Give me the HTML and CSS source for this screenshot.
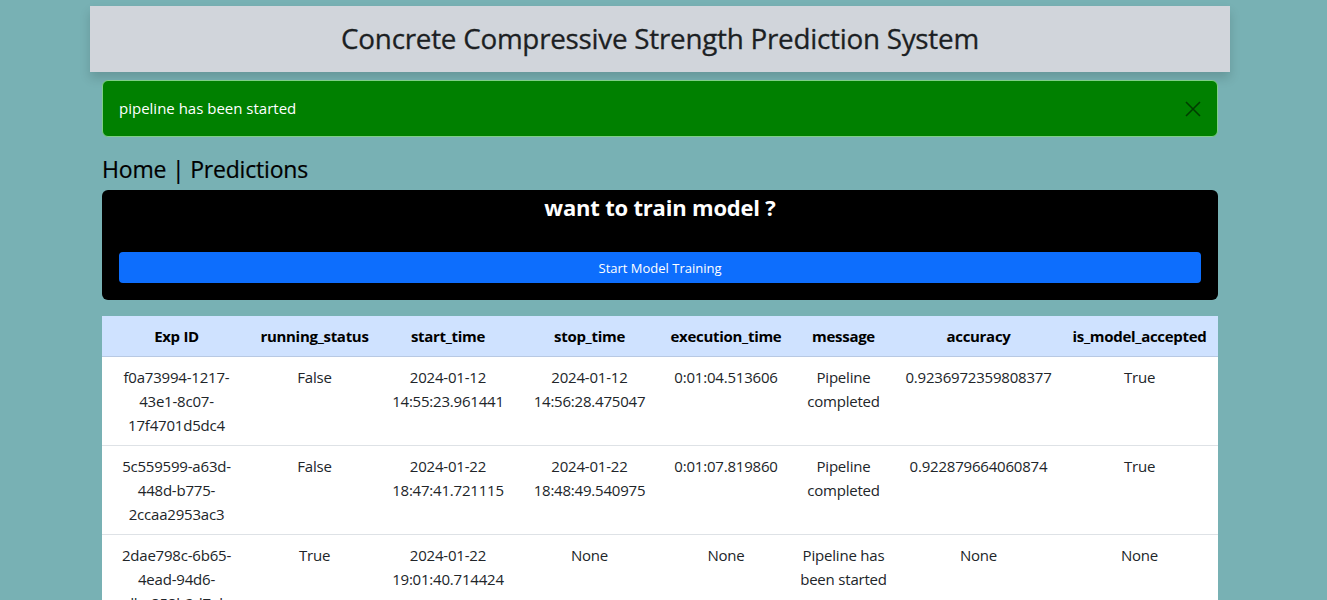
FILE: index.html
```html
<!DOCTYPE html>
<html lang="en">
<head>
<meta charset="utf-8">
<title>Concrete Compressive Strength Prediction System</title>
<link rel="stylesheet" href="styles.css">
</head>
<body>
<div class="page">
  <header class="topbar">
    <h1 class="title">Concrete Compressive Strength Prediction System</h1>
  </header>
  <main class="content">
    <div class="alert">
      <span>pipeline has been started</span>
      <button class="close" aria-label="Close">
        <svg width="16" height="16" viewBox="0 0 16 16"><path d="M1 1 L15 15 M15 1 L1 15" stroke="currentColor" stroke-width="1.6" fill="none"/></svg>
      </button>
    </div>
    <nav class="nav"><a href="#">Home</a> | <a href="#">Predictions</a></nav>
    <section class="train">
      <h2 class="train-title">want to train model ?</h2>
      <button class="btn">Start Model Training</button>
    </section>
    <table class="runs">
      <colgroup>
        <col style="width:149px"><col style="width:127px"><col style="width:140px"><col style="width:143px"><col style="width:130px"><col style="width:105px"><col style="width:165px"><col style="width:157px">
      </colgroup>
      <thead>
        <tr>
          <th>Exp ID</th><th>running_status</th><th>start_time</th><th>stop_time</th><th>execution_time</th><th>message</th><th>accuracy</th><th>is_model_accepted</th>
        </tr>
      </thead>
      <tbody>
        <tr>
          <td>f0a73994-1217-<br>43e1-8c07-<br>17f4701d5dc4</td><td>False</td><td>2024-01-12<br>14:55:23.961441</td><td>2024-01-12<br>14:56:28.475047</td><td>0:01:04.513606</td><td>Pipeline<br>completed</td><td>0.9236972359808377</td><td>True</td>
        </tr>
        <tr>
          <td>5c559599-a63d-<br>448d-b775-<br>2ccaa2953ac3</td><td>False</td><td>2024-01-22<br>18:47:41.721115</td><td>2024-01-22<br>18:48:49.540975</td><td>0:01:07.819860</td><td>Pipeline<br>completed</td><td>0.922879664060874</td><td>True</td>
        </tr>
        <tr>
          <td>2dae798c-6b65-<br>4ead-94d6-<br>dbe858b2d7eb</td><td>True</td><td>2024-01-22<br>19:01:40.714424</td><td>None</td><td>None</td><td>Pipeline has<br>been started</td><td>None</td><td>None</td>
        </tr>
      </tbody>
    </table>
  </main>
</div>
</body>
</html>
```
FILE: styles.css
```css
* { box-sizing: border-box; }
body {
  margin: 0;
  padding-right: 7px;
  background: #78b1b4;
  font-family: "Open Sans", "Noto Sans", sans-serif;
  font-size: 16px;
  line-height: 1.5;
  color: #212529;
}
.page {
  width: 1140px;
  margin: 0 auto;
  padding-top: 6px;
}
.topbar {
  height: 66px;
  background: #d1d5db;
  box-shadow: 0 6px 10px rgba(0,0,0,0.15);
  display: flex;
  align-items: center;
  justify-content: center;
}
.title {
  margin: 0;
  font-size: 27.8px;
  font-weight: 400;
  letter-spacing: -0.25px;
  color: #1c1f23;
  line-height: 1.2;
  -webkit-text-stroke: 0.3px #1c1f23;
}
.content {
  padding: 0 12px;
}
.alert {
  margin-top: 8px;
  height: 57px;
  background: #008000;
  border: 1px solid #7fcf86;
  border-radius: 6px;
  color: #fff;
  padding: 0 16px;
  display: flex;
  align-items: center;
  justify-content: space-between;
  font-size: 15px;
}
.close {
  border: 0;
  background: none;
  color: #003d00;
  padding: 0;
  margin-right: 0;
  display: flex;
  cursor: pointer;
}
.nav {
  margin-top: 18px;
  font-size: 23px;
  line-height: 28px;
  color: #000;
  letter-spacing: -0.2px;
  -webkit-text-stroke: 0.2px #000;
}
.nav a { color: #000; text-decoration: none; }
.train {
  margin-top: 7px;
  background: #000;
  border-radius: 6px;
  padding: 2px 17px 17px;
  text-align: center;
}
.train-title {
  margin: 0;
  font-size: 22px;
  font-weight: 700;
  color: #fff;
  line-height: 30px;
  letter-spacing: -0.2px;
}
.btn {
  display: block;
  width: 100%;
  margin-top: 30px;
  height: 31px;
  background: #0d6efd;
  border: 0;
  border-radius: 4px;
  color: #fff;
  font-family: inherit;
  font-size: 13px;
}
.runs {
  margin-top: 16px;
  width: 100%;
  table-layout: fixed;
  border-collapse: collapse;
  background: #fff;
  text-align: center;
  font-size: 15px;
  line-height: 24px;
}
.runs th {
  background: #cfe2ff;
  color: #000;
  font-weight: 700;
  padding: 8px 4px;
  border-bottom: 1px solid #b8c9e3;
  white-space: nowrap;
  letter-spacing: -0.3px;
}
.runs td {
  padding: 8px 4px;
  vertical-align: top;
  border-bottom: 1px solid #dee2e6;
  letter-spacing: -0.2px;
}
```
